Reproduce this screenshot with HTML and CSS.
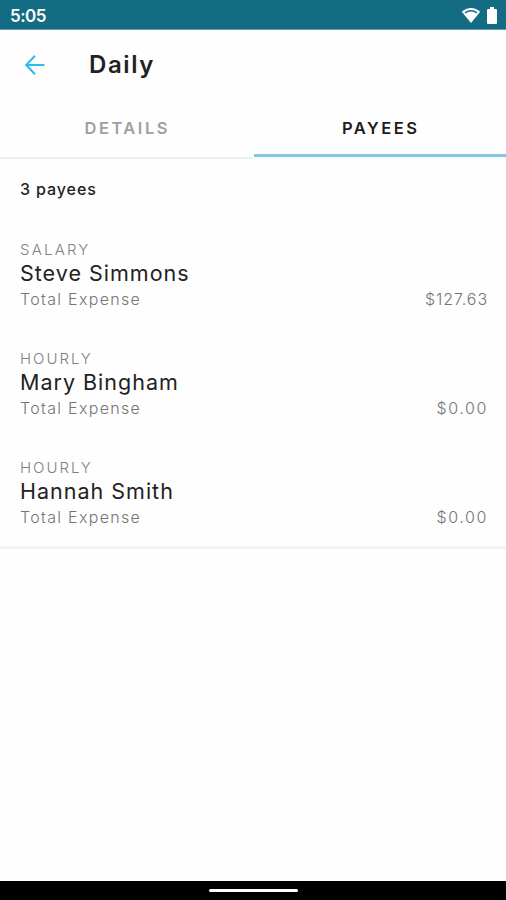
FILE: index.html
```html
<!doctype html>
<html lang="en">
  <head>
    <meta charset="UTF-8" />
    <meta name="viewport" content="width=device-width, initial-scale=1.0" />
    <title>Daily</title>
    <link rel="stylesheet" href="styles.css">
  </head>
  <body>
    <div class="screen">
      <div class="status-bar">
        <span class="clock">5:05</span>
        <div class="status-icons">
          <svg width="20" height="17" viewBox="0 0 20 17">
            <path d="M0.8 4.8C6 -0.4 14 -0.4 19.2 4.8L10 16Z" fill="#fff" />
            <path d="M4 5.8C8 3.2 12 3.2 16 5.8" fill="none" stroke="#146c84" stroke-width="1.5" />
          </svg>
          <svg width="10" height="17" viewBox="0 0 10 17">
            <path d="M3 0h4v2h2q1 0 1 1v13q0 1 -1 1h-8q-1 0 -1 -1v-13q0 -1 1 -1h2z" fill="#fff" />
          </svg>
        </div>
      </div>

      <header class="app-bar">
        <svg class="back" width="20" height="20" viewBox="0 0 20 20">
          <path d="M10 0.8L1.2 10L10 19.2M1.2 10H19.5" fill="none" stroke="#2dbde9" stroke-width="2" />
        </svg>
        <h1>Daily</h1>
      </header>

      <nav class="tabs">
        <div class="tab">DETAILS</div>
        <div class="tab active">PAYEES</div>
      </nav>

      <div class="count">3 payees</div>

      <ul class="payees">
        <li class="payee">
          <div class="type salary">SALARY</div>
          <div class="name">Steve Simmons</div>
          <div class="expense"><span>Total Expense</span><span class="amount">$127.63</span></div>
        </li>
        <li class="payee">
          <div class="type">HOURLY</div>
          <div class="name">Mary Bingham</div>
          <div class="expense"><span>Total Expense</span><span class="amount zero">$0.00</span></div>
        </li>
        <li class="payee">
          <div class="type">HOURLY</div>
          <div class="name">Hannah Smith</div>
          <div class="expense"><span>Total Expense</span><span class="amount zero">$0.00</span></div>
        </li>
      </ul>

      <div class="nav-bar"><div class="handle"></div></div>
    </div>
  </body>
</html>
```

FILE: styles.css
```css
body {
  margin: 0;
  font-family: Inter, "Open Sans", sans-serif;
  color: #222;
  background: #fefefe;
}

.screen {
  display: flex;
  flex-direction: column;
  height: 900px;
}

.status-bar {
  box-sizing: border-box;
  height: 30px;
  padding: 0 9px 0 10px;
  display: flex;
  align-items: center;
  justify-content: space-between;
  background: #146c84;
  border-bottom: 1px solid #5f9bab;
}

.clock {
  color: #fff;
  font-size: 17px;
  font-weight: 600;
  letter-spacing: -0.5px;
  line-height: 20px;
  padding-top: 2px;
}

.status-icons {
  display: flex;
  gap: 6px;
  padding-top: 1px;
}

.app-bar {
  height: 69px;
  padding-left: 25px;
  display: flex;
  align-items: center;
}

.app-bar h1 {
  margin: 0 0 0 44px;
  font-size: 24px;
  font-weight: 600;
  letter-spacing: 1.6px;
}

.tabs {
  display: flex;
  height: 60px;
}

.tab {
  box-sizing: border-box;
  flex: 1;
  padding: 19px 0 0 2px;
  text-align: center;
  font-size: 16.5px;
  font-weight: 600;
  line-height: 20px;
  letter-spacing: 2.5px;
  color: #a0a0a0;
  border-bottom: 2px solid #edf0f1;
}

.tab.active {
  height: 60px;
  margin-left: 1px;
  color: #1c1c1c;
  border-bottom-color: #f8f8f8;
  box-shadow: inset 0 -3px #80c8e1;
}

.count {
  box-sizing: border-box;
  height: 61px;
  padding-left: 20px;
  line-height: 61px;
  font-size: 16px;
  font-weight: 500;
  letter-spacing: 0.9px;
  border-bottom: 1px solid #fafafa;
}

.payees {
  list-style: none;
  margin: 0;
  padding: 0;
  border-bottom: 3px solid #f4f4f4;
}

.payee {
  padding: 19px 18px 18px 20px;
}

.payee:last-child {
  padding-bottom: 17px;
}

.type {
  font-size: 15px;
  line-height: 22px;
  letter-spacing: 2px;
  color: #808080;
  font-weight: 300;
}

.type.salary {
  letter-spacing: 2.2px;
}

.name {
  font-size: 21.5px;
  line-height: 25px;
  padding-bottom: 1px;
  letter-spacing: 1px;
}

.expense {
  display: flex;
  justify-content: space-between;
  font-size: 16px;
  font-weight: 300;
  line-height: 24px;
  letter-spacing: 1.3px;
  color: #757575;
}

.amount {
  letter-spacing: 0.9px;
}

.amount.zero {
  letter-spacing: 1.6px;
}

.nav-bar {
  margin-top: auto;
  height: 19px;
  display: flex;
  align-items: center;
  justify-content: center;
  background: #000;
}

.handle {
  width: 89px;
  height: 3px;
  border-radius: 2px;
  background: #fff;
}
```
